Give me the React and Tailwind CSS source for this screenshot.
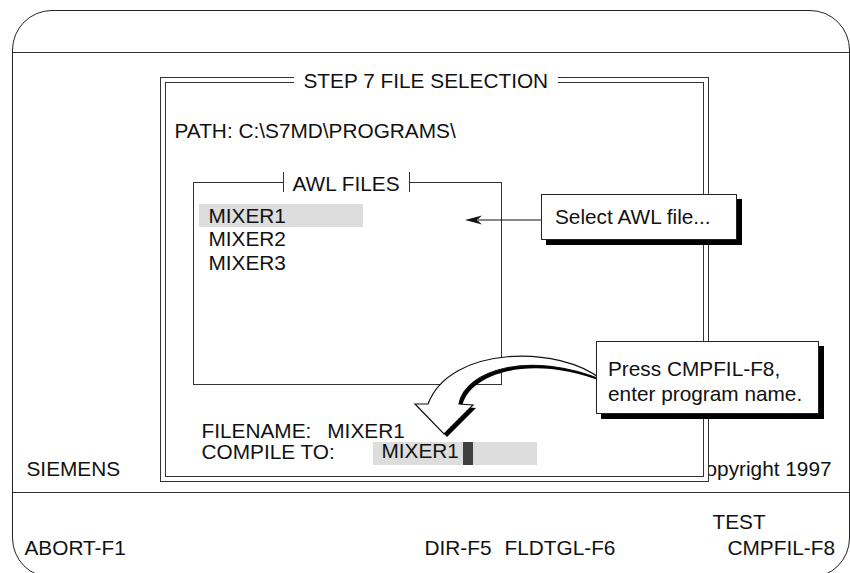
export default function App() {
  return (
    <div className="relative w-[850px] h-[573px] overflow-hidden bg-white font-['Liberation_Sans',Arial,sans-serif] text-[20.8px] leading-[24px] text-[#111]">
      <div className="ml-[12px] mt-[10px] w-[838px] h-[568px] rounded-[40px] border-[1.5px] border-[#222] flex flex-col">
        {/* title bar */}
        <div className="h-[42px] border-b-[1.5px] border-[#333]" />

        {/* work area */}
        <div className="h-[440px] border-b-[1.5px] border-[#333] flex items-start pt-[23.5px]">
          <div className="w-[146.5px] pl-[13.5px] mt-[380px]">SIEMENS</div>

          <div className="relative z-10 w-[549px] h-[405px] border border-[#333] bg-white p-[4px]">
            <span className="absolute left-[133px] top-[-9px] bg-white px-[10px] whitespace-nowrap">
              STEP 7 FILE SELECTION
            </span>
            <div className="h-full border border-[#333] flex flex-col">
              <div className="pt-[36px] pl-[9px] whitespace-nowrap">PATH: C:\S7MD\PROGRAMS\</div>

              <div className="relative mt-[39px] ml-[27px] w-[309px] h-[203px] border border-[#333]">
                <span className="absolute left-[89px] top-[-11px] h-[20px] border-x border-[#333] bg-white px-[9px] whitespace-nowrap">
                  AWL FILES
                </span>
                <div className="pt-[21px] pl-[5px]">
                  <div className="w-[164px] h-[23px] bg-[#dddddd] pl-[10px] leading-[23px]">MIXER1</div>
                  <div className="h-[24px] pl-[10px]">MIXER2</div>
                  <div className="h-[24px] pl-[10px]">MIXER3</div>
                </div>
              </div>

              <div className="mt-[35px] pl-[36px] leading-[21px]">
                <div className="flex h-[21px]">
                  <span>FILENAME:</span>
                  <span className="ml-[16px]">MIXER1</span>
                </div>
                <div className="flex items-start h-[21px]">
                  <span className="w-[171px]">COMPILE TO:</span>
                  <div className="mt-[1px] w-[164px] h-[23px] bg-[#dddddd] flex">
                    <span className="pl-[9px] leading-[18px]">MIXER1</span>
                    <span className="ml-[4px] w-[10px] bg-[#404040]" />
                  </div>
                </div>
              </div>
            </div>
          </div>

          <div className="relative z-0 -ml-[18px] mt-[380px] whitespace-nowrap">Copyright 1997</div>
        </div>

        {/* function keys */}
        <div className="pt-[17px]">
          <div className="h-[26px] pl-[699.5px]">TEST</div>
          <div className="flex whitespace-nowrap">
            <span className="w-[411.5px] pl-[11.5px]">ABORT-F1</span>
            <span className="w-[80px]">DIR-F5</span>
            <span className="w-[223px]">FLDTGL-F6</span>
            <span>CMPFIL-F8</span>
          </div>
        </div>
      </div>

      {/* arrows */}
      <svg className="absolute left-0 top-0 z-20 pointer-events-none" width="850" height="573" viewBox="0 0 850 573">
        <line x1="478" y1="220" x2="541" y2="220" stroke="#111" strokeWidth="1.2" />
        <polygon points="465,220 482,215.5 477,220 482,224.5" fill="#111" />
        <path
          d="M602,380 C560,345 450,345 428,404 L415,404 L444,434 L473,405 L459,404 C465,370 530,350 602,380 Z"
          transform="translate(3 3)"
          fill="#000"
        />
        <path
          d="M602,380 C560,345 450,345 428,404 L415,404 L444,434 L473,405 L459,404 C465,370 530,350 602,380 Z"
          fill="#fff"
          stroke="#111"
          strokeWidth="1.2"
          strokeLinejoin="miter"
        />
      </svg>

      {/* callouts */}
      <div className="absolute left-[541px] top-[194px] z-30 w-[196px] h-[46px] border-[1.5px] border-[#222] bg-white shadow-[5px_5px_0_#000] flex items-center pl-[13px] whitespace-nowrap">
        Select AWL file...
      </div>
      <div className="absolute left-[596px] top-[341px] z-30 w-[223px] h-[73px] border-[1.5px] border-[#222] bg-white shadow-[5px_5px_0_#000] pl-[11px] pt-[14px] leading-[25px] whitespace-nowrap">
        <div>Press CMPFIL-F8,</div>
        <div>enter program name.</div>
      </div>
    </div>
  );
}
